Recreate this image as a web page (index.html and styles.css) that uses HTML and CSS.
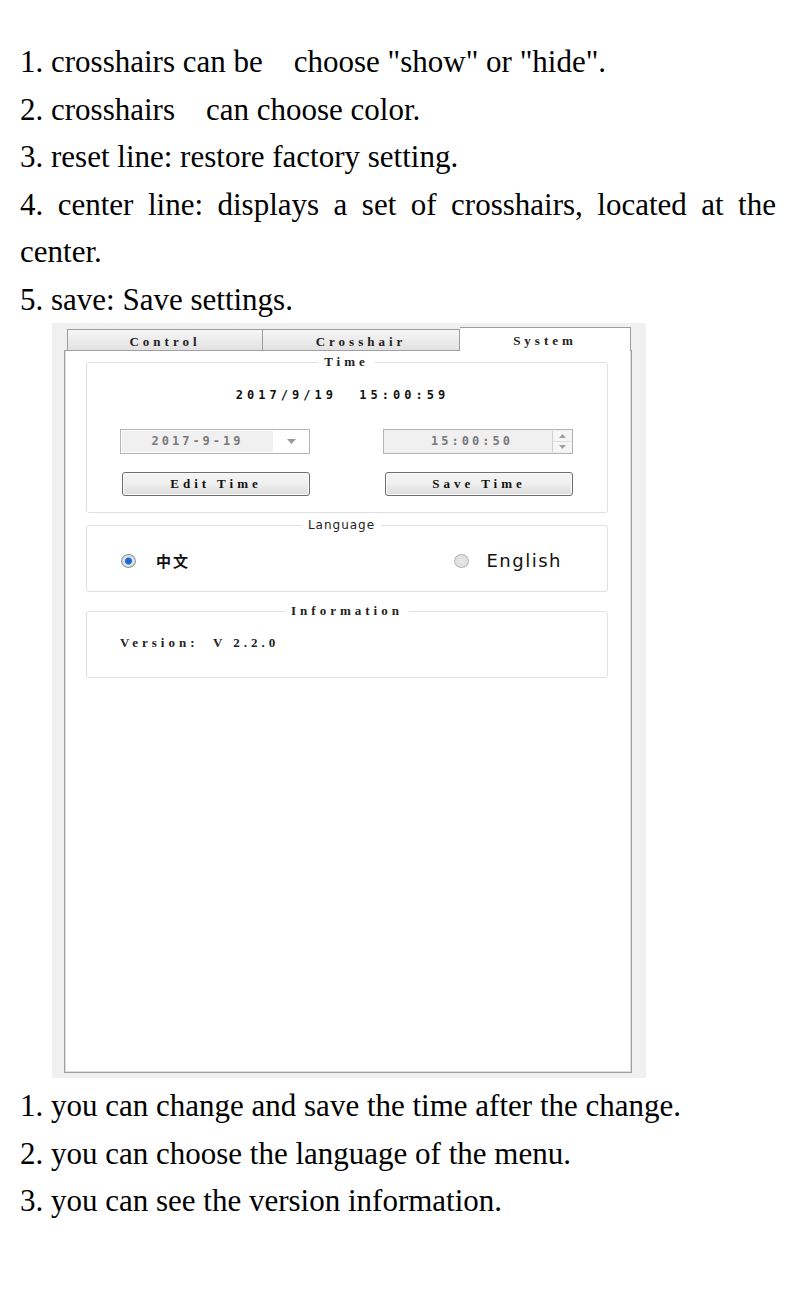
FILE: index.html
```html
<!DOCTYPE html>
<html lang="en">
<head>
    <meta charset="UTF-8">
    <meta name="viewport" content="width=device-width, initial-scale=1.0">
    <title>System settings</title>
    <link rel="stylesheet" href="styles.css">
</head>
<body>
    <!-- crosshair page notes -->
    <div class="notes top-notes">
        <p>1. crosshairs can be　choose "show" or "hide".</p>
        <p>2. crosshairs　can choose color.</p>
        <p>3. reset line: restore factory setting.</p>
        <p class="justify">4. center line: displays a set of crosshairs, located at the center.</p>
        <p>5. save: Save settings.</p>
    </div>

    <!-- settings window, System tab -->
    <div class="window">
        <div class="tabs">
            <div class="tab">Control</div>
            <div class="tab">Crosshair</div>
            <div class="tab active">System</div>
        </div>
        <div class="panel">
            <fieldset class="group time-group">
                <legend>Time</legend>
                <div class="clock">2017/9/19&nbsp;&nbsp;15:00:59</div>
                <div class="time-grid">
                    <div class="combo">
                        <span class="field">2017-9-19</span>
                        <span class="drop">
                            <svg width="9" height="5" viewBox="0 0 9 5"><path d="M0 0h9L4.5 5z" fill="#9a9a9a"/></svg>
                        </span>
                    </div>
                    <div class="spin">
                        <span class="field">15:00:50</span>
                        <span class="arrows">
                            <span class="arrow"><svg width="7" height="4" viewBox="0 0 7 4"><path d="M0 4L3.5 0 7 4z" fill="#a0a0a0"/></svg></span>
                            <span class="arrow"><svg width="7" height="4" viewBox="0 0 7 4"><path d="M0 0h7L3.5 4z" fill="#a0a0a0"/></svg></span>
                        </span>
                    </div>
                    <button class="btn">Edit Time</button>
                    <button class="btn">Save Time</button>
                </div>
            </fieldset>

            <fieldset class="group lang-group">
                <legend class="sans">Language</legend>
                <div class="lang-row">
                    <label class="radio-item"><span class="radio checked"></span><span class="zh">中文</span></label>
                    <label class="radio-item"><span class="radio"></span><span class="en">English</span></label>
                </div>
            </fieldset>

            <fieldset class="group info-group">
                <legend>Information</legend>
                <div class="version">Version:&nbsp;&nbsp;V 2.2.0</div>
            </fieldset>
        </div>
    </div>

    <!-- system page notes -->
    <div class="notes bottom-notes">
        <p>1. you can change and save the time after the change.</p>
        <p>2. you can choose the language of the menu.</p>
        <p>3. you can see the version information.</p>
    </div>
</body>
</html>
```

FILE: styles.css
```css
* {
    margin: 0;
    padding: 0;
    box-sizing: border-box;
}

body {
    background-color: #fff;
    color: #000;
    font-family: "Liberation Serif", "Noto Sans CJK SC", serif;
}

.notes {
    padding: 0 24px 0 20px;
    font-size: 31px;
    line-height: 47.5px;
}

.top-notes {
    padding-top: 38px;
}

.bottom-notes {
    padding-top: 4px;
}

.notes .justify {
    text-align: justify;
}

/* window screenshot */
.window {
    margin-left: 52px;
    width: 594px;
    height: 755px;
    background-color: #f0f0f0;
    padding-top: 4px;
    font-family: "Liberation Serif", serif;
    font-weight: bold;
    font-size: 13px;
    color: #222;
}

.tabs {
    display: flex;
    align-items: flex-end;
    height: 23px;
    padding-left: 15px;
}

.tab {
    width: 197px;
    height: 21px;
    border: 1px solid #9c9c9c;
    border-bottom: none;
    border-left: none;
    background: linear-gradient(#f6f6f6, #e2e2e2);
    text-align: center;
    line-height: 23px;
    letter-spacing: 4px;
}

.tab:first-child {
    width: 196px;
    border-left: 1px solid #9c9c9c;
}

.tab.active {
    width: 171px;
    height: 24px;
    margin-bottom: -1px;
    background: #fff;
    line-height: 25px;
    position: relative;
    z-index: 1;
    border-left: none;
}

.panel {
    margin-left: 12px;
    width: 568px;
    height: 723px;
    background-color: #fff;
    border: 1px solid #a0a0a0;
    box-shadow: inset 1px 0 0 #dcdcdc, inset -1px -1px 0 #dcdcdc;
    padding: 4px 23px 0 21px;
}

.group {
    border: 1px solid #dbe1e6;
    border-radius: 3px;
}

.group legend {
    margin: 0 auto;
    padding: 0 6px;
    line-height: 14px;
    letter-spacing: 4px;
    font-weight: bold;
    color: #222;
}

.group legend.sans {
    font-family: "DejaVu Sans", sans-serif;
    font-weight: normal;
    letter-spacing: 1px;
    font-size: 12px;
}

/* time box */
.time-group {
    padding: 18px 34px 16px 33px;
}

.clock {
    text-align: center;
    font-family: "DejaVu Sans Mono", monospace;
    font-size: 12px;
    line-height: 16px;
    letter-spacing: 4px;
    color: #111;
    margin-right: 8px;
}

.time-grid {
    display: grid;
    grid-template-columns: 190px 190px;
    justify-content: space-between;
    row-gap: 18px;
    margin-top: 26px;
}

.combo, .spin {
    display: flex;
    height: 25px;
    border: 1px solid #b5b5b5;
    background: #fff;
    font-family: "DejaVu Sans Mono", monospace;
    font-size: 12px;
    color: #7a7a7a;
    letter-spacing: 3px;
}

.combo .field {
    flex: 1;
    margin: 1px 0 1px 1px;
    background: #f0f0f0;
    text-align: center;
    line-height: 21px;
}

.combo .drop {
    width: 36px;
    display: flex;
    align-items: center;
    justify-content: center;
}

.spin {
    background: #f0f0f0;
}

.spin .field {
    flex: 1;
    text-align: center;
    line-height: 23px;
    padding-left: 8px;
}

.spin .arrows {
    width: 19px;
    display: flex;
    flex-direction: column;
    border-left: 1px solid #d0d0d0;
    margin: 1px 1px 1px 0;
}

.spin .arrow {
    flex: 1;
    display: flex;
    align-items: center;
    justify-content: center;
    background: #f6f6f6;
}

.spin .arrow + .arrow {
    border-top: 1px solid #e0e0e0;
}

.btn {
    height: 24px;
    width: 188px;
    margin-left: 2px;
    border: 1px solid #6e6e6e;
    border-radius: 3px;
    background: linear-gradient(#f4f4f4, #f0f0f0 45%, #dcdcdc);
    box-shadow: inset 0 0 0 1px #fbfbfb;
    font-family: "Liberation Serif", serif;
    font-weight: bold;
    font-size: 13px;
    letter-spacing: 4px;
    color: #111;
}

/* language box */
.lang-group {
    margin-top: 5px;
    padding: 18px 45px 20px 34px;
}

.lang-row {
    display: flex;
    justify-content: space-between;
    align-items: center;
}

.radio-item {
    display: flex;
    align-items: center;
}

.radio {
    width: 15px;
    height: 14px;
    border-radius: 50%;
    border: 1px solid #b8b8b8;
    background: radial-gradient(circle, #e6e6e6 0, #dcdcdc 100%);
}

.radio.checked {
    border-color: #8d96a0;
    background: radial-gradient(circle, #1c62c8 0, #1f6ad6 3px, #dfe3e8 4px, #cfd3d8 100%);
}

.zh {
    margin-left: 20px;
    font-family: "Noto Sans CJK SC", sans-serif;
    font-size: 15px;
    font-weight: bold;
    letter-spacing: 2px;
    color: #111;
}

.en {
    margin-left: 18px;
    font-family: "DejaVu Sans", sans-serif;
    font-weight: normal;
    font-size: 18px;
    letter-spacing: 1.5px;
    color: #111;
}

/* information box */
.info-group {
    margin-top: 12px;
    padding: 17px 33px 26px 33px;
}

.version {
    font-size: 13px;
    letter-spacing: 4px;
    line-height: 16px;
}
```
